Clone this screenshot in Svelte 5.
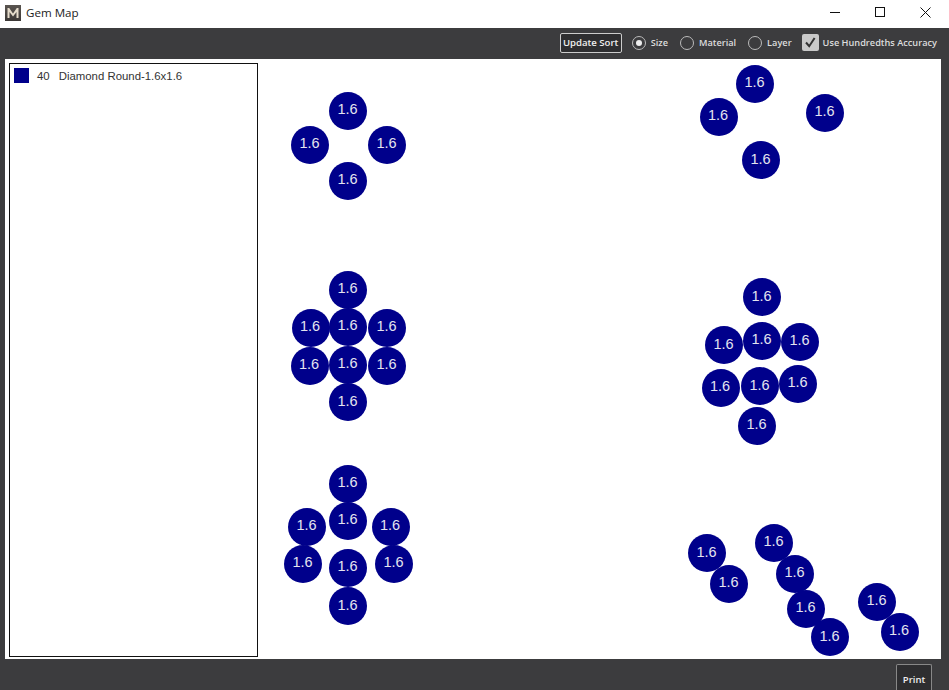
<script lang="ts">
  const GEM_SIZE = 38;

  // gem centres in window coordinates, the canvas starts at 5,59
  const gems = [
    [348, 110.5], [310, 144.5], [387, 144.5], [348, 180.5],
    [348, 289.5], [310.5, 327.5], [348, 326.5], [387, 327.5], [309.5, 365.5], [348, 364.5], [387, 365.5], [348, 402],
    [348, 483.5], [307, 526.5], [348, 520.5], [390.5, 526.5], [303, 563.5], [348, 567.5], [394, 563.5], [348, 606],
    [755, 83.5], [718.5, 116.5], [825, 112.5], [761, 160],
    [762, 297], [724, 345], [762, 340.5], [800, 341.5], [720.5, 387.5], [760, 386], [798, 383.5], [757, 425.5],
    [707, 553], [729, 583.5], [774, 542.5], [795, 573.5], [806, 608.5], [830, 637], [877, 601.5], [899.5, 631.5]
  ];

  const sortOptions = ['Size', 'Material', 'Layer'];
  let sortBy = 'Size';
  let hundredths = true;
</script>

<div class="window">
  <header class="titlebar">
    <div class="title">
      <svg class="logo" viewBox="0 0 16 16" width="16" height="16">
        <defs>
          <linearGradient id="logo-bg" x1="0" y1="0" x2="0" y2="1">
            <stop offset="0" stop-color="#5a5550" />
            <stop offset="1" stop-color="#3c3836" />
          </linearGradient>
        </defs>
        <rect width="16" height="16" fill="url(#logo-bg)" />
        <path d="M2.5 13V3h1.7L8 8.4 11.8 3h1.7v10h-2V7L8 11.6 4.5 7v6z" fill="#e6dccb" />
      </svg>
      <span>Gem Map</span>
    </div>
    <div class="controls">
      <svg viewBox="0 0 45 28" width="45" height="28"><path d="M17 12.5h10" stroke="#111" fill="none" /></svg>
      <svg viewBox="0 0 45 28" width="45" height="28"><rect x="17.5" y="7.5" width="9" height="9" stroke="#111" fill="none" /></svg>
      <svg viewBox="0 0 45 28" width="45" height="28"><path d="M17.5 7.5l10 10M27.5 7.5l-10 10" stroke="#111" fill="none" /></svg>
    </div>
  </header>

  <div class="toolbar">
    <button class="update">Update Sort</button>
    {#each sortOptions as option}
      <label class="radio">
        <span class="dot" class:on={sortBy === option}></span>
        <input type="radio" bind:group={sortBy} value={option} />
        {option}
      </label>
    {/each}
    <label class="check">
      <span class="box">
        <svg viewBox="0 0 17 17" width="17" height="17">
          <path d="M4 8.5l3.2 3.7L12.6 4" stroke="#333" stroke-width="2" fill="none" />
        </svg>
      </span>
      <input type="checkbox" bind:checked={hundredths} />
      Use Hundredths Accuracy
    </label>
  </div>

  <main class="canvas">
    <div class="legend">
      <div class="legend-row">
        <span class="swatch"></span>
        <span class="count">40</span>
        <span>Diamond Round-1.6x1.6</span>
      </div>
    </div>
    {#each gems as [x, y]}
      <div class="gem" style:left="{x - 5 - GEM_SIZE / 2}px" style:top="{y - 59 - GEM_SIZE / 2}px">1.6</div>
    {/each}
  </main>

  <footer class="footer">
    <button class="print">Print</button>
  </footer>
</div>

<style>
  :global(body) {
    margin: 0;
    background: #3c3c3e;
  }

  .window {
    display: flex;
    flex-direction: column;
    width: 949px;
    height: 690px;
    overflow: hidden;
    background: #3c3c3e;
    font-family: "Open Sans", "Noto Sans", sans-serif;
  }

  .titlebar {
    display: flex;
    flex: none;
    align-items: center;
    justify-content: space-between;
    height: 28px;
    background: #fff;
  }

  .title {
    display: flex;
    align-items: center;
    gap: 5px;
    padding: 0 0 3px 5px;
    font-size: 11.6px;
    color: #222;
  }

  .logo {
    display: block;
  }

  .controls {
    display: flex;
    padding-right: 1px;
  }

  .controls svg {
    display: block;
  }

  .toolbar {
    display: flex;
    flex: none;
    align-items: center;
    justify-content: flex-end;
    height: 29px;
    margin-bottom: 2px;
    padding-right: 12px;
    box-sizing: border-box;
    font-size: 9.2px;
    font-weight: 600;
    color: #ddd;
  }

  .update {
    width: 62px;
    height: 20px;
    margin-right: 10px;
    padding: 0;
    border: 1px solid #ccc;
    border-radius: 2px;
    background: #2e2e30;
    color: #eee;
    font: inherit;
    font-size: 9.6px;
  }

  .radio,
  .check {
    display: flex;
    align-items: center;
  }

  .radio {
    gap: 5px;
    margin-right: 12px;
  }

  .radio:nth-of-type(3) {
    margin-right: 10px;
  }

  .radio input,
  .check input {
    display: none;
  }

  .dot {
    position: relative;
    box-sizing: border-box;
    width: 14px;
    height: 14px;
    border: 1px solid #bbb;
    border-radius: 50%;
  }

  .dot.on::after {
    position: absolute;
    inset: 3px;
    border-radius: 50%;
    background: #eee;
    content: '';
  }

  .check {
    gap: 4px;
  }

  .box {
    display: block;
    width: 17px;
    height: 17px;
    border-radius: 2px;
    background: #c9c9c9;
  }

  .box svg {
    display: block;
  }

  .canvas {
    position: relative;
    flex: none;
    box-sizing: border-box;
    width: 936px;
    height: 600px;
    margin-left: 5px;
    padding: 4px;
    background: #fff;
    overflow: hidden;
  }

  .legend {
    box-sizing: border-box;
    width: 249px;
    height: 594px;
    padding: 4px;
    border: 1px solid #111;
  }

  .legend-row {
    display: flex;
    align-items: center;
    height: 15px;
    font-family: "Liberation Sans", Arial, sans-serif;
    font-size: 11.4px;
    color: #333;
  }

  .swatch {
    width: 15px;
    height: 15px;
    margin-right: 8px;
    background: #00008b;
  }

  .count {
    margin-right: 9px;
  }

  .gem {
    position: absolute;
    display: flex;
    align-items: center;
    justify-content: center;
    width: 38px;
    height: 38px;
    padding: 0 1px 3px 0;
    box-sizing: border-box;
    border-radius: 50%;
    background: #00008b;
    color: #e4e4f0;
    font-family: "Liberation Sans", Arial, sans-serif;
    font-size: 14.5px;
  }

  .footer {
    display: flex;
    flex: 1;
    justify-content: flex-end;
    padding: 5px 17px 0 0;
  }

  .print {
    width: 36px;
    height: 30px;
    padding: 0 0 1px;
    border: 1px solid #888;
    border-bottom: 0;
    border-radius: 2px 2px 0 0;
    background: #2e2e30;
    color: #eee;
    font-family: "Open Sans", sans-serif;
    font-size: 9.5px;
    font-weight: 600;
  }
</style>
